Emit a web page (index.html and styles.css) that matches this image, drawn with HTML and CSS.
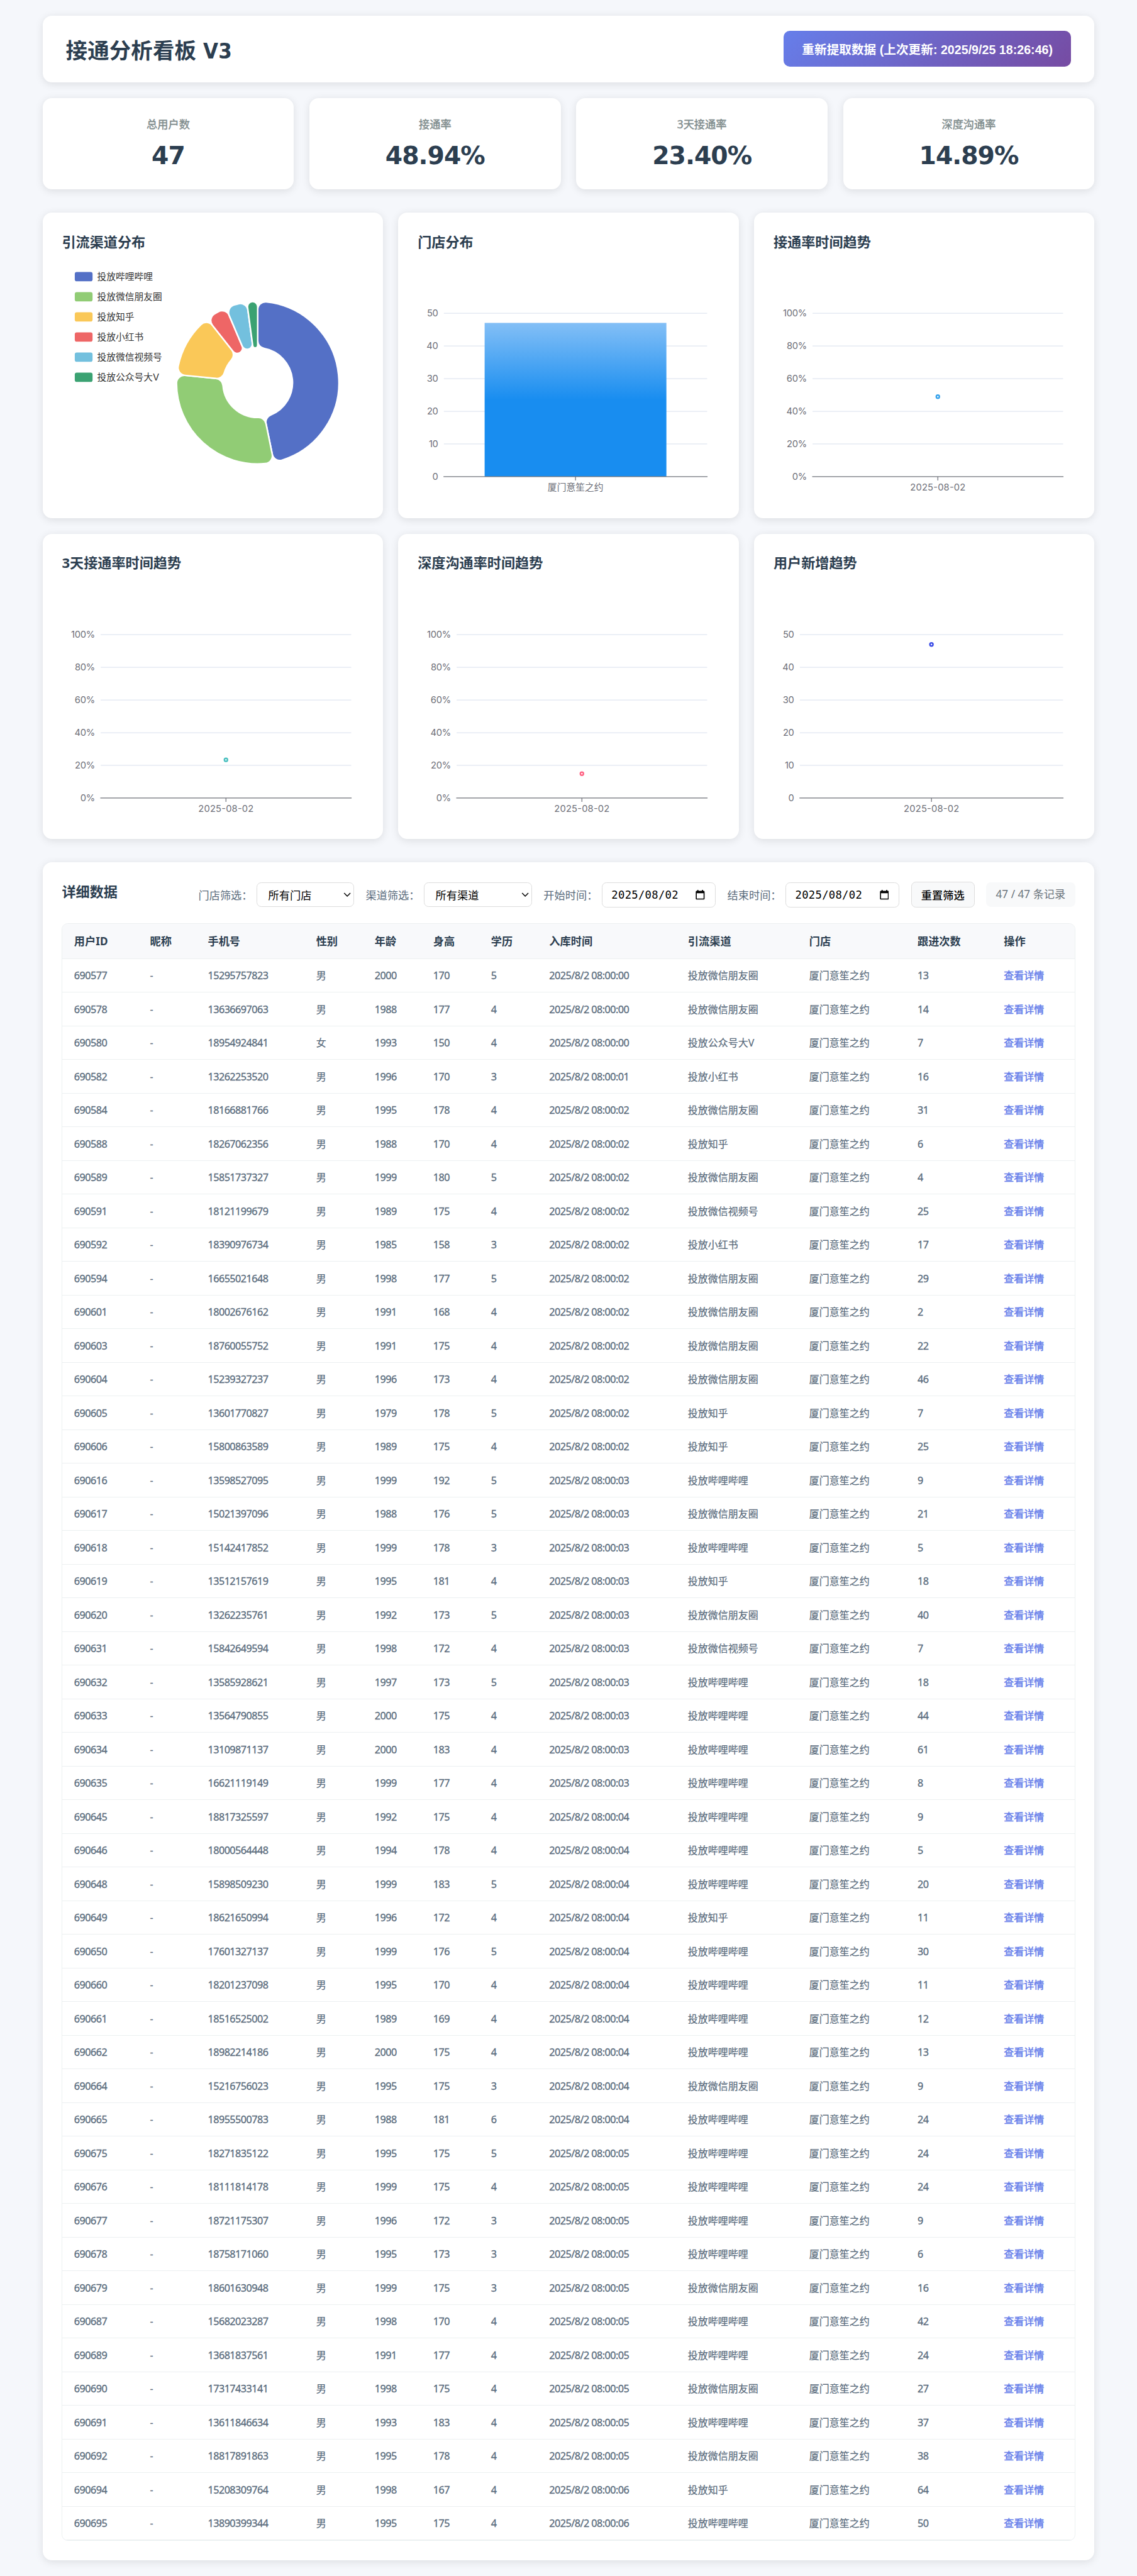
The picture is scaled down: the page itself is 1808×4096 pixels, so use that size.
FILE: index.html
```html
<!DOCTYPE html>
<html lang="zh-CN">
<head>
<meta charset="utf-8">
<title>接通分析看板 V3</title>
<link rel="stylesheet" href="styles.css">
</head>
<body>
<div class="container">
  <header class="header card">
    <h1>接通分析看板 V3</h1>
    <button class="refresh-btn">重新提取数据 (上次更新: 2025/9/25 18:26:46)</button>
  </header>

  <section class="stats">
    <div class="stat card"><div class="stat-label">总用户数</div><div class="stat-value">47</div></div>
    <div class="stat card"><div class="stat-label">接通率</div><div class="stat-value">48.94%</div></div>
    <div class="stat card"><div class="stat-label">3天接通率</div><div class="stat-value">23.40%</div></div>
    <div class="stat card"><div class="stat-label">深度沟通率</div><div class="stat-value">14.89%</div></div>
  </section>

  <section class="charts">
    <div class="chart card"><h3>引流渠道分布</h3><svg id="channelChart" class="plot" viewBox="0 0 390 300"></svg></div>
    <div class="chart card"><h3>门店分布</h3><svg id="storeChart" class="plot" viewBox="0 0 390 300"></svg></div>
    <div class="chart card"><h3>接通率时间趋势</h3><svg id="rateChart" class="plot" viewBox="0 0 390 300"></svg></div>
    <div class="chart card"><h3>3天接通率时间趋势</h3><svg id="rate3Chart" class="plot" viewBox="0 0 390 300"></svg></div>
    <div class="chart card"><h3>深度沟通率时间趋势</h3><svg id="deepChart" class="plot" viewBox="0 0 390 300"></svg></div>
    <div class="chart card"><h3>用户新增趋势</h3><svg id="newChart" class="plot" viewBox="0 0 390 300"></svg></div>
  </section>

  <section class="details card">
    <div class="details-head">
      <h3>详细数据</h3>
      <div class="filters">
        <div class="filter"><label>门店筛选：</label><div class="select store">所有门店<svg viewBox="0 0 10 6"><path d="M1 .8 5 4.8 9 .8"/></svg></div></div>
        <div class="filter"><label>渠道筛选：</label><div class="select channel">所有渠道<svg viewBox="0 0 10 6"><path d="M1 .8 5 4.8 9 .8"/></svg></div></div>
        <div class="filter"><label>开始时间：</label><div class="date">2025/08/02<svg viewBox="0 0 12 13"><path fill-rule="evenodd" d="M2.3 0h1.4v1.2h4.6V0h1.4v1.2h.8c.7 0 1.2.5 1.2 1.2v8.9c0 .7-.5 1.2-1.2 1.2h-9C.8 12.5.3 12 .3 11.3V2.4c0-.7.5-1.2 1.2-1.2h.8zM1.6 4.3v6.9h8.8V4.3z"/></svg></div></div>
        <div class="filter"><label>结束时间：</label><div class="date">2025/08/02<svg viewBox="0 0 12 13"><path fill-rule="evenodd" d="M2.3 0h1.4v1.2h4.6V0h1.4v1.2h.8c.7 0 1.2.5 1.2 1.2v8.9c0 .7-.5 1.2-1.2 1.2h-9C.8 12.5.3 12 .3 11.3V2.4c0-.7.5-1.2 1.2-1.2h.8zM1.6 4.3v6.9h8.8V4.3z"/></svg></div></div>
        <button class="reset-btn">重置筛选</button>
        <span class="record-count">47 / 47 条记录</span>
      </div>
    </div>
    <table class="table">
      <thead><tr><th>用户ID</th><th>昵称</th><th>手机号</th><th>性别</th><th>年龄</th><th>身高</th><th>学历</th><th>入库时间</th><th>引流渠道</th><th>门店</th><th>跟进次数</th><th>操作</th></tr></thead>
      <tbody id="rows"></tbody>
    </table>
  </section>
</div>
<script src="app.js"></script>
</body>
</html>
```
FILE: styles.css
```css
/* 1rem = 10 design units */
html { font-size: 12.29932px; }
* { box-sizing: border-box; margin: 0; padding: 0; }
body {
  background: #f5f7fb;
  color: #2c3e50;
  font-family: "Noto Sans", "Noto Sans CJK SC", sans-serif;
  font-size: 1.4rem;
}
.container { width: 136rem; margin: 0 auto; padding: 2rem 0; }
.card { background: #fff; border-radius: 1.2rem; box-shadow: 0 .2rem 1rem rgba(0, 0, 0, .1); }

.header { display: flex; align-items: center; justify-content: space-between; height: 8.65rem; padding: 0 3rem; margin-bottom: 2rem; }
.header h1 { font-family: "DejaVu Sans Condensed", "DejaVu Sans", "Noto Sans CJK SC", sans-serif; font-stretch: condensed; font-size: 2.8rem; font-weight: 700; white-space: nowrap; letter-spacing: .005em; }
.refresh-btn {
  height: 4.65rem; width: 37.2rem; border: 0; border-radius: .8rem; color: #fff; white-space: nowrap;
  background: linear-gradient(135deg, #667eea 0%, #764ba2 100%);
  font: 700 1.6rem "Liberation Sans", "Noto Sans CJK SC", sans-serif;
}

.stats { display: grid; grid-template-columns: repeat(4, 1fr); gap: 2rem; margin-bottom: 3rem; }
.stat { height: 11.85rem; padding-top: 2.5rem; text-align: center; }
.stat-label { font-size: 1.4rem; line-height: 2rem; margin-bottom: 1.1rem; color: #7f8c8d; -webkit-text-stroke: .025em; }
.stat-value { font-family: "DejaVu Sans", sans-serif; font-size: 3.2rem; line-height: 3.85rem; font-weight: 700; letter-spacing: -.025em; }

.charts { display: grid; grid-template-columns: repeat(3, 1fr); gap: 2rem; margin-bottom: 3rem; }
.chart { height: 39.5rem; padding: 2.5rem; }
.chart h3, .details h3 { font-size: 1.8rem; line-height: 2.45rem; font-weight: 700; white-space: nowrap; }
.chart h3 { margin-bottom: 2.05rem; }
.plot { display: block; width: 39rem; height: 30rem; font-family: Inter, "Noto Sans CJK SC", sans-serif; font-size: 12px; }
.plot .label { fill: #6e7079; }
.plot .legend { fill: #333; }
.plot .grid { stroke: #e0e6f1; }
.plot .axis { stroke: #6e7079; }

.details { padding: 2.5rem; }
.details-head { display: flex; justify-content: space-between; height: 3.37rem; margin-bottom: 2rem; }
.filters { display: flex; align-items: center; gap: 1.5rem; white-space: nowrap; }
.filter { display: flex; align-items: center; gap: .5rem; }
.filter label { width: 7rem; color: #5a6c7d; }
.select, .date { display: flex; align-items: center; justify-content: space-between; border: 1px solid #ddd; border-radius: .6rem; color: #000; background: #fff; }
.select { height: 3.15rem; padding: 0 .3rem 0 1.45rem; }
.select svg { width: 1rem; height: .6rem; fill: none; stroke: #000; stroke-width: 1.2; }
.store { width: 12.63rem; }
.channel { width: 14rem; }
.date { width: 14.76rem; height: 3.23rem; padding: 0 1.3rem 0 1.2rem; font-family: "DejaVu Sans Mono", monospace; letter-spacing: .017em; }
.date svg { width: 1.2rem; height: 1.3rem; fill: #000; }
.reset-btn { width: 8.21rem; height: 3.37rem; border: 1px solid #ddd; border-radius: .6rem; background: #f8f9fa; color: #000; font: 500 1.4rem "Noto Sans CJK SC", sans-serif; }
.record-count { width: 11.5rem; height: 3.17rem; line-height: 3.17rem; border-radius: .6rem; background: #f8f9fa; color: #6c757d; text-align: center; }

.table { display: block; border: 1px solid #ecf0f1; border-radius: .8rem; overflow: hidden; }
.table thead, .table tbody { display: block; }
.table tr { display: grid; grid-template-columns: 9.81rem 7.48rem 14rem 7.57rem 7.57rem 7.48rem 7.52rem 17.93rem 15.69rem 14rem 11.17rem 1fr; align-items: center; height: 4.35rem; border-bottom: 1px solid #ecf0f1; }
.table thead tr { height: 4.51rem; background: #f8f9fb; }
.table th, .table td { padding: .12rem 0 0 1.5rem; text-align: left; white-space: nowrap; line-height: 2rem; }
.table th { font-size: 1.4rem; font-weight: 700; }
.table td { font-size: 1.3rem; color: #5a6c7d; -webkit-text-stroke: .012em; }
.table td.num { font-size: 1.32rem; letter-spacing: -.034em; -webkit-text-stroke: .02em; }
.table a { color: #667eea; text-decoration: none; -webkit-text-stroke: .03em; }
```
FILE: app.js
```js
const CHANNELS = { B: '投放哔哩哔哩', W: '投放微信朋友圈', Z: '投放知乎', X: '投放小红书', S: '投放微信视频号', V: '投放公众号大V' };
const STORE = '厦门意笙之约';

// id, phone, birth year, height, education, second, channel, follow-ups
const USERS = `690577 15295757823 2000 170 5 0 W 13
690578 13636697063 1988 177 4 0 W 14
690580 18954924841 1993 150 4 0 V 7
690582 13262253520 1996 170 3 1 X 16
690584 18166881766 1995 178 4 2 W 31
690588 18267062356 1988 170 4 2 Z 6
690589 15851737327 1999 180 5 2 W 4
690591 18121199679 1989 175 4 2 S 25
690592 18390976734 1985 158 3 2 X 17
690594 16655021648 1998 177 5 2 W 29
690601 18002676162 1991 168 4 2 W 2
690603 18760055752 1991 175 4 2 W 22
690604 15239327237 1996 173 4 2 W 46
690605 13601770827 1979 178 5 2 Z 7
690606 15800863589 1989 175 4 2 Z 25
690616 13598527095 1999 192 5 3 B 9
690617 15021397096 1988 176 5 3 W 21
690618 15142417852 1999 178 3 3 B 5
690619 13512157619 1995 181 4 3 Z 18
690620 13262235761 1992 173 5 3 W 40
690631 15842649594 1998 172 4 3 S 7
690632 13585928621 1997 173 5 3 B 18
690633 13564790855 2000 175 4 3 B 44
690634 13109871137 2000 183 4 3 B 61
690635 16621119149 1999 177 4 3 B 8
690645 18817325597 1992 175 4 4 B 9
690646 18000564448 1994 178 4 4 B 5
690648 15898509230 1999 183 5 4 B 20
690649 18621650994 1996 172 4 4 Z 11
690650 17601327137 1999 176 5 4 B 30
690660 18201237098 1995 170 4 4 B 11
690661 18516525002 1989 169 4 4 B 12
690662 18982214186 2000 175 4 4 B 13
690664 15216756023 1995 175 3 4 W 9
690665 18955500783 1988 181 6 4 B 24
690675 18271835122 1995 175 5 5 B 24
690676 18111814178 1999 175 4 5 B 24
690677 18721175307 1996 172 3 5 B 9
690678 18758171060 1995 173 3 5 B 6
690679 18601630948 1999 175 3 5 W 16
690687 15682023287 1998 170 4 5 B 42
690689 13681837561 1991 177 4 5 B 24
690690 17317433141 1998 175 4 5 W 27
690691 13611846634 1993 183 4 5 B 37
690692 18817891863 1995 178 4 5 W 38
690694 15208309764 1998 167 4 6 Z 64
690695 13890399344 1995 175 4 6 B 50`;

document.getElementById('rows').innerHTML = USERS.split('\n').map(line => {
  const [id, phone, year, height, edu, sec, ch, count] = line.split(' ');
  const n = v => `<td class="num">${v}</td>`;
  const sex = id === '690580' ? '女' : '男';
  return `<tr>${n(id)}<td>-</td>${n(phone)}<td>${sex}</td>${n(year)}${n(height)}${n(edu)}` +
    n(`2025/8/2 08:00:0${sec}`) + `<td>${CHANNELS[ch]}</td><td>${STORE}</td>${n(count)}<td><a>查看详情</a></td></tr>`;
}).join('');

// Cartesian frame: six horizontal lines, one category
const TOP = 60.3, BOTTOM = 271.5, RIGHT = 374.4;
function frame(left, max, unit, name, width, marks) {
  let s = '';
  for (let i = 0; i <= 5; i++) {
    const y = BOTTOM - (BOTTOM - TOP) * i / 5;
    if (i) s += `<line class="grid" x1="${left}" x2="${RIGHT}" y1="${y}" y2="${y}"/>`;
    s += `<text class="label" text-anchor="end" x="${left - 7.5}" y="${y + 4.2}" letter-spacing="-.25">${max / 5 * i}${unit}</text>`;
  }
  const mid = (left + RIGHT) / 2;
  return s + marks(mid) +
    `<line class="axis" x1="${left - .5}" x2="${RIGHT + .5}" y1="${BOTTOM}" y2="${BOTTOM}"/>` +
    `<line class="axis" x1="${mid}" x2="${mid}" y1="${BOTTOM}" y2="${BOTTOM + 5}"/>` +
    `<text class="label" x="${mid - width / 2}" y="289.6" textLength="${width}">${name}</text>`;
}
const put = (id, html) => { document.getElementById(id).innerHTML = html; };
const trend = (id, left, max, unit, value, color) =>
  put(id, frame(left, max, unit, '2025-08-02', 71.6, x =>
    `<circle cx="${x}" cy="${BOTTOM - (BOTTOM - TOP) * value / max}" r="2" fill="#fff" stroke="${color}" stroke-width="2"/>`));

put('storeChart', '<defs><linearGradient id="bar" x1="0" y1="0" x2="0" y2="1"><stop offset="0" stop-color="#83bff6"/><stop offset=".5" stop-color="#188df0"/><stop offset="1" stop-color="#188df0"/></linearGradient></defs>' +
  frame(34, 50, '', STORE, 72, x => `<rect x="${x - 117.5}" y="72.7" width="235" height="198.8" fill="url(#bar)"/>`));
trend('rateChart', 50.5, 100, '%', 48.94, '#36a2eb');
trend('rate3Chart', 50.5, 100, '%', 23.4, '#4bc0c0');
trend('deepChart', 50.5, 100, '%', 14.89, '#ff6384');
trend('newChart', 34, 50, '', 47, '#3b4ce6');

// Ring with rounded sectors
const SLICES = [['B', 22, '#5470c6'], ['W', 14, '#91cc75'], ['Z', 6, '#fac858'], ['X', 2, '#ee6666'], ['S', 2, '#73c0de'], ['V', 1, '#3ba272']];
const CX = 253.5, CY = 150, R = 105, r = 45;
const pt = (d, a) => `${(CX + d * Math.sin(a)).toFixed(2)} ${(CY - d * Math.cos(a)).toFixed(2)}`;
let angle = 0, ring = '';
SLICES.forEach(([key, value, color], i) => {
  const a0 = angle, a1 = angle += value / 47 * 2 * Math.PI;
  const half = (a1 - a0) / 2, s = half < Math.PI / 2 ? Math.sin(half) : 1;
  const co = Math.min(10, R * s / (1 + s)), ci = s < 1 ? Math.min(10, r * s / (1 - s)) : 10;
  const oa = Math.asin(co / (R - co)), od = Math.sqrt((R - co) ** 2 - co ** 2);
  const ia = Math.asin(ci / (r + ci)), id = Math.sqrt((r + ci) ** 2 - ci ** 2);
  const d = `M${pt(od, a0)}A${co} ${co} 0 0 1 ${pt(R, a0 + oa)}A${R} ${R} 0 0 1 ${pt(R, a1 - oa)}A${co} ${co} 0 0 1 ${pt(od, a1)}` +
    `L${pt(id, a1)}A${ci} ${ci} 0 0 1 ${pt(r, a1 - ia)}A${r} ${r} 0 0 0 ${pt(r, a0 + ia)}A${ci} ${ci} 0 0 1 ${pt(id, a0)}Z`;
  ring += `<path d="${d}" fill="${color}" stroke="#fff" stroke-width="2"/>` +
    `<rect x="17" y="${7 + i * 26}" width="23" height="12" rx="2.5" fill="${color}"/>` +
    `<text class="legend" x="46" y="${17.4 + i * 26}">${CHANNELS[key]}</text>`;
});
put('channelChart', ring);
```
